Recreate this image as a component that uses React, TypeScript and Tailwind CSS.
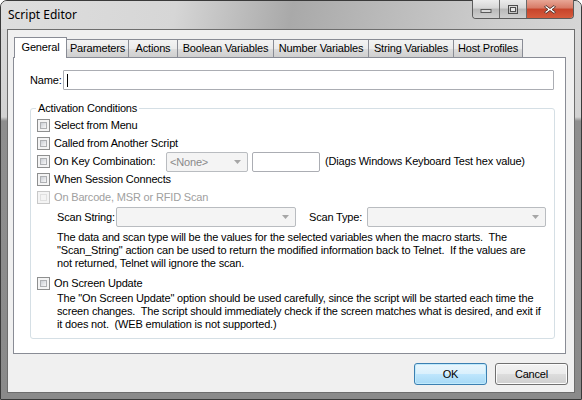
import React from 'react'

const font = "font-['Liberation_Sans',Arial,sans-serif]"

function Checkbox({ disabled }: { disabled?: boolean }) {
  return (
    <div
      className={
        'w-[13px] h-[13px] shrink-0 border p-[2px] ' +
        (disabled ? 'border-[#c8c8c8] bg-[#f4f4f4]' : 'border-[#8e8f8f] bg-[#f4f4f4]')
      }
    >
      <div
        className={
          'w-full h-full border ' +
          (disabled
            ? 'border-[#e0e0e0] bg-[#f4f4f4]'
            : 'border-[#aeb0b3] bg-[linear-gradient(135deg,#cbcfd5,#f7f7f7)]')
        }
      />
    </div>
  )
}

function CheckRow({
  label,
  disabled,
  labelW,
  children,
}: {
  label: string
  disabled?: boolean
  labelW?: string
  children?: React.ReactNode
}) {
  return (
    <div className="flex items-center h-[18px]">
      <Checkbox disabled={disabled} />
      <span
        className={
          'ml-[4px] whitespace-pre shrink-0 ' + (labelW ?? '') + (disabled ? ' text-[#a0a0a0]' : ' text-black')
        }
      >
        {label}
      </span>
      {children}
    </div>
  )
}

function Arrow() {
  return (
    <svg width="7" height="4" viewBox="0 0 7 4" className="shrink-0">
      <path d="M0 0h7L3.5 4z" fill="#a6a6a6" />
    </svg>
  )
}

function Combo({ w, text }: { w: string; text?: string }) {
  return (
    <div
      className={
        'h-[20px] shrink-0 rounded-[2px] border border-[#b9bcc0] bg-[#f4f4f4] flex items-center pl-[3px] pr-[6px] ' + w
      }
    >
      <span className="flex-1 text-[#8a8a8a]">{text}</span>
      <Arrow />
    </div>
  )
}

function Tab({ label, w, selected }: { label: string; w: string; selected?: boolean }) {
  if (selected) {
    return (
      <div
        className={
          'h-[21px] -mb-px border border-b-0 border-[#898c95] bg-white flex items-center justify-center pb-[2px] relative z-10 ' +
          w
        }
      >
        {label}
      </div>
    )
  }
  return (
    <div
      className={
        'h-[18px] -ml-px border border-b-0 border-[#898c95] bg-[linear-gradient(#f3f3f3,#ebebeb_50%,#dddddd_51%,#cfcfcf)] flex items-center justify-center ' +
        w
      }
    >
      {label}
    </div>
  )
}

function Button({ label, primary }: { label: string; primary?: boolean }) {
  return (
    <div
      className={
        'w-[73px] h-[22px] rounded-[3px] border flex items-center justify-center ' +
        (primary
          ? 'border-[#3c7fb1] bg-[linear-gradient(#eaf6fd,#d9f0fc_50%,#bee6fd_51%,#a7d9f5)] shadow-[inset_0_0_0_1px_#c0eafc]'
          : 'border-[#707070] bg-[linear-gradient(#f2f2f2,#ebebeb_50%,#dddddd_51%,#cfcfcf)] shadow-[inset_0_0_0_1px_#fcfcfc]')
      }
    >
      {label}
    </div>
  )
}

export default function App() {
  return (
    <div
      className={
        'w-[582px] h-[400px] rounded-t-[7px] border border-[#3a3a3a] flex flex-col bg-[linear-gradient(#dadada,#d2d2d2_116px,#8e8e8e_120px,#8a8a8a)] text-[11px] tracking-[-0.17px] text-black ' +
        font
      }
    >
      <div className="h-[28px] shrink-0 flex items-start justify-between pl-[7px] pr-[7px] rounded-t-[6px] bg-[linear-gradient(100deg,#dedede_0%,#d6d6d6_30%,#a9a9a9_50%,#b9b9b9_65%,#cdcdcd_85%,#d6d6d6_100%)]">
        <div className="pt-[6px] text-[12px] tracking-normal text-black font-['Noto_Sans',sans-serif] leading-[16px]">
          Script Editor
        </div>
        <div className="flex h-[19px] -mt-px border border-[#5c5c5c] border-t-0 rounded-b-[4px] overflow-hidden">
          <div className="w-[27px] h-full flex items-center justify-center bg-[linear-gradient(#ececec,#d6d6d6_45%,#b9b9b9_50%,#cfcfcf)] border-r border-[#6a6a6a]">
            <svg width="12" height="10" viewBox="0 0 12 10">
              <rect x="1" y="5.5" width="10" height="3" fill="#d9d9d9" stroke="#5a5a5a" strokeWidth="1" />
            </svg>
          </div>
          <div className="w-[27px] h-full flex items-center justify-center bg-[linear-gradient(#ececec,#d6d6d6_45%,#b9b9b9_50%,#cfcfcf)] border-r border-[#6a6a6a]">
            <svg width="12" height="11" viewBox="0 0 12 11">
              <rect x="1.5" y="1.5" width="9" height="8" fill="none" stroke="#4e4e4e" strokeWidth="1" />
              <rect x="3.5" y="3.5" width="5" height="4" fill="#e8e8e8" stroke="#4e4e4e" strokeWidth="1" />
            </svg>
          </div>
          <div className="w-[46px] h-full flex items-center justify-center bg-[linear-gradient(#e8a696,#d77a66_45%,#c7442b_50%,#d65b3c)]">
            <svg width="14" height="11" viewBox="0 0 14 11">
              <path
                d="M3 1.5l4 3 4-3 1.5 1.5-3.5 2.5 3.5 2.5L11 9.5 7 6.5l-4 3-1.5-1.5L5 5.5 1.5 3z"
                fill="#fff"
                stroke="#4a2b25"
                strokeWidth="0.9"
                strokeLinejoin="round"
              />
            </svg>
          </div>
        </div>
      </div>

      <div className="flex-1 mx-[6px] mb-[6px] border border-[#6d6d6d] bg-[#f0f0f0] flex flex-col pl-[5px] pr-[8px] pt-[7px]">
        <div className="flex items-end pl-[1px]">
          <Tab label="General" w="w-[53px]" selected />
          <Tab label="Parameters" w="w-[63px]" />
          <Tab label="Actions" w="w-[50px]" />
          <Tab label="Boolean Variables" w="w-[97px]" />
          <Tab label="Number Variables" w="w-[96px]" />
          <Tab label="String Variables" w="w-[86px]" />
          <Tab label="Host Profiles" w="w-[70px]" />
        </div>
        <div className="h-[297px] border border-[#898c95] bg-white flex flex-col pl-[16px] pr-[10px]">
          <div className="flex items-center mt-[12px] h-[20px] mr-[1px]">
            <span className="w-[33px]">Name:</span>
            <div className="flex-1 h-full border border-[#abadb3] rounded-[1px] bg-white flex items-center pl-[3px]">
              <div className="w-px h-[13px] bg-black" />
            </div>
          </div>

          <div className="relative mt-[18px] h-[231px] border border-[#d5dfe5] rounded-[3px] pl-[6px] pt-[7px]">
            <div className="absolute -top-[8px] left-[5px] px-[2px] bg-white leading-[14px]">Activation Conditions</div>
            <CheckRow label="Select from Menu" />
            <CheckRow label="Called from Another Script" />
            <CheckRow label="On Key Combination:" labelW="w-[112px]">
              <div className="mt-[2px]">
                <Combo w="w-[82px]" text="<None>" />
              </div>
              <div className="ml-[4px] mt-[2px] w-[68px] h-[20px] shrink-0 border border-[#abadb3] rounded-[2px] bg-white" />
              <span className="ml-[5px] whitespace-nowrap">(Diags Windows Keyboard Test hex value)</span>
            </CheckRow>
            <CheckRow label="When Session Connects" />
            <CheckRow label="On Barcode, MSR or RFID Scan" disabled />
            <div className="flex items-center mt-px h-[20px] pl-[20px]">
              <span className="w-[59px] shrink-0 whitespace-nowrap">Scan String:</span>
              <Combo w="w-[180px]" />
              <span className="ml-[13px] w-[58px] shrink-0 whitespace-nowrap">Scan Type:</span>
              <Combo w="w-[179px]" />
            </div>
            <div className="mt-[4px] pl-[20px] leading-[13px] whitespace-pre">
              <div>The data and scan type will be the values for the selected variables when the macro starts.  The</div>
              <div>"Scan_String" action can be used to return the modified information back to Telnet.  If the values are</div>
              <div>not returned, Telnet will ignore the scan.</div>
            </div>
            <div className="mt-[4px]">
              <CheckRow label="On Screen Update" />
            </div>
            <div className="pl-[20px] leading-[13px] whitespace-pre">
              <div>The "On Screen Update" option should be used carefully, since the script will be started each time the</div>
              <div>screen changes.  The script should immediately check if the screen matches what is desired, and exit if</div>
              <div>it does not.  (WEB emulation is not supported.)</div>
            </div>
          </div>
        </div>

        <div className="flex justify-end gap-[8px] mt-[9px] -mr-[2px]">
          <Button label="OK" primary />
          <Button label="Cancel" />
        </div>
      </div>
    </div>
  )
}
